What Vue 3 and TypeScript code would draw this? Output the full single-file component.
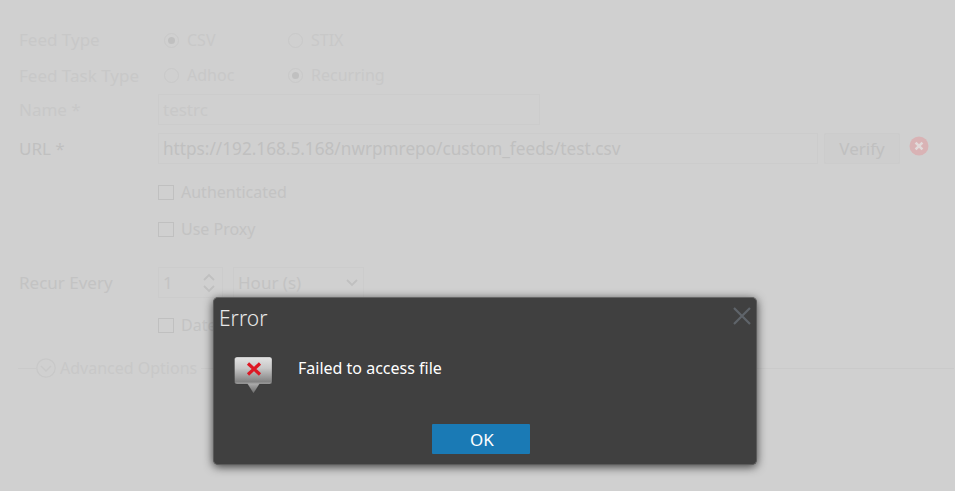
<script setup lang="ts">
const title = 'Error'
const message = 'Failed to access file'
</script>

<template>
  <div class="page">
    <form class="form">
      <div class="row r-type">
        <span class="label faint">Feed Type</span>
        <div class="radios">
          <span class="radio-item"><i class="radio on"></i><span class="faint">CSV</span></span>
          <span class="radio-item"><i class="radio"></i><span class="faint">STIX</span></span>
        </div>
      </div>
      <div class="row r-task">
        <span class="label faint">Feed Task Type</span>
        <div class="radios">
          <span class="radio-item"><i class="radio"></i><span class="faint">Adhoc</span></span>
          <span class="radio-item"><i class="radio on"></i><span class="faint">Recurring</span></span>
        </div>
      </div>
      <div class="row r-name">
        <span class="label faint">Name *</span>
        <div class="input name faint">testrc</div>
      </div>
      <div class="row r-url">
        <span class="label mid">URL *</span>
        <div class="input url mid">https://192.168.5.168/nwrpmrepo/custom_feeds/test.csv</div>
        <div class="verify mid">Verify</div>
        <svg class="err" width="20" height="20" viewBox="0 0 20 20">
          <circle cx="10" cy="10" r="9.500" fill="#d9b3b5" />
          <path d="M6.600 6.600l6.800 6.800M13.400 6.600l-6.800 6.800" stroke="#e2dada" stroke-width="2.600" />
        </svg>
      </div>
      <label class="check r-auth"><i class="box"></i><span class="soft">Authenticated</span></label>
      <label class="check r-proxy"><i class="box"></i><span class="soft">Use Proxy</span></label>
      <div class="row r-recur">
        <span class="label soft">Recur Every</span>
        <div class="input spin soft">
          <span>1</span>
          <svg width="14" height="24" viewBox="0 0 14 24" fill="none" stroke="#c0c0c0" stroke-width="1.800">
            <path d="M2 9l5-5 5 5M2 15l5 5 5-5" />
          </svg>
        </div>
        <div class="input select soft">
          <span>Hour (s)</span>
          <svg width="14" height="10" viewBox="0 0 14 10" fill="none" stroke="#c0c0c0" stroke-width="1.800">
            <path d="M2 2l5 5 5-5" />
          </svg>
        </div>
      </div>
      <label class="check r-date"><i class="box"></i><span class="soft">Date Range</span></label>
      <div class="advanced">
        <span class="dash short"></span>
        <svg width="20" height="20" viewBox="0 0 20 20" fill="none" stroke="#c8c8c8" stroke-width="1.200">
          <circle cx="10" cy="10" r="9.200" />
          <path d="M5 8l5 5 5-5" stroke-width="1.500" />
        </svg>
        <span class="faint adv-text">Advanced Options</span>
        <span class="dash long"></span>
      </div>
    </form>

    <section class="dialog" role="alertdialog">
      <header class="head">
        <h2>{{ title }}</h2>
        <svg class="close" width="18" height="18" viewBox="0 0 18 18" stroke="#5f646a" stroke-width="2.200" fill="none">
          <path d="M1 1l16 16M17 1L1 17" />
        </svg>
      </header>
      <div class="body">
        <svg class="bubble" width="40" height="38" viewBox="0 0 40 38">
          <defs>
            <linearGradient id="bub" x1="0" y1="0" x2="0" y2="1">
              <stop offset="0" stop-color="#e4e4e4" />
              <stop offset="0.3" stop-color="#c8c8c8" />
              <stop offset="0.68" stop-color="#828282" />
              <stop offset="0.74" stop-color="#ababab" />
              <stop offset="0.8" stop-color="#9a9a9a" />
              <stop offset="1" stop-color="#6a6a6a" />
            </linearGradient>
          </defs>
          <path d="M3.500 1h32a2.500 2.500 0 0 1 2.500 2.500v22a2.500 2.500 0 0 1-2.500 2.500h-10l-6 9.500-6-9.500h-10.500a2.500 2.500 0 0 1-2.500-2.500v-22a2.500 2.500 0 0 1 2.500-2.500z" fill="url(#bub)" stroke="#2a2a2a" stroke-opacity="0.300" stroke-width="0.800" />
          <path d="M14 7.500l12 11M26 7.500l-12 11" stroke="#dd1824" stroke-width="3.200" />
        </svg>
        <p>{{ message }}</p>
      </div>
      <footer class="foot"><div class="ok">OK</div></footer>
    </section>
  </div>
</template>

<style>
html, body { margin: 0; padding: 0; background: #d0d0d0; }
</style>

<style scoped>
.page {
  width: 955px;
  height: 491px;
  background: #d0d0d0;
  position: relative;
  overflow: hidden;
  font-family: "Noto Sans", "Open Sans", sans-serif;
  font-size: 16px;
}
.form { display: flex; flex-direction: column; padding-left: 19px; }
.faint { color: #c8c8c8; }
.mid { color: #c0c0c0; }
.soft { color: #c3c3c3; }
.row { display: flex; align-items: center; font-size: 16px; }
.label { width: 139px; flex: none; font-size: 17px; }
.r-type { height: 24px; margin-top: 28px; }
.r-type .label { margin-top: -2px; }
.r-task { height: 24px; margin-top: 11px; }
.r-name { height: 31px; margin-top: 7px; }
.r-url { height: 31px; margin-top: 8px; }
.radios { display: flex; margin-left: 6px; }
.radio-item { display: flex; align-items: center; gap: 8px; width: 124px; }
.radio {
  width: 15px; height: 15px; border-radius: 50%;
  border: 1px solid #c9c9c9; box-sizing: border-box; position: relative;
}
.radio.on::after {
  content: ""; position: absolute; inset: 3px; border-radius: 50%; background: #c0c0c0;
}
.input {
  box-sizing: border-box;
  border: 1px solid #cccccc;
  height: 31px;
  padding: 0 4px;
  display: flex;
  align-items: center;
}
.name { width: 382px; font-size: 17px; }
.url { width: 660px; font-size: 17.200px; }
.verify {
  margin-left: 6px; width: 76px; height: 31px; box-sizing: border-box;
  border: 1px solid #cccccc; border-radius: 2px;
  background: #cecece;
  display: flex; align-items: center; justify-content: center;
  font-size: 17px;
}
.err { margin-left: 9px; margin-top: -6px; flex: none; }
.check { display: flex; align-items: center; gap: 7px; margin-left: 139px; height: 24px; }
.box { width: 16px; height: 15px; box-sizing: border-box; border: 1px solid #c0c0c0; }
.r-auth { margin-top: 16px; }
.r-proxy { margin-top: 13px; }
.r-recur { margin-top: 26px; height: 31px; }
.spin { width: 65px; justify-content: space-between; padding-right: 6px; font-size: 17px; }
.select { width: 131px; margin-left: 10px; justify-content: space-between; padding-right: 4px; font-size: 17px; }
.r-date { margin-top: 15px; }
.advanced { display: flex; align-items: center; margin-top: 19px; height: 24px; width: 936px; margin-left: -1px; }
.dash { height: 1px; background: #cacaca; display: block; }
.short { width: 18px; }
.adv-text { margin-left: 4px; margin-right: 4px; }
.long { flex: 1; }

.dialog {
  position: absolute;
  left: 213px;
  top: 297px;
  width: 544px;
  height: 168px;
  box-sizing: border-box;
  background: #404040;
  border: 1px solid #5c5c5c;
  border-top-color: #666;
  border-radius: 5px;
  box-shadow: 0 2px 10px rgba(0, 0, 0, 0.7);
  color: #fff;
  display: flex;
  flex-direction: column;
}
.head { display: flex; align-items: center; justify-content: space-between; height: 40px; padding: 0 5px 0 5px; }
.head h2 { margin: 0; font-size: 21px; font-weight: 300; color: #e9e9e9; }
.close { margin-top: -4px; }
.body { display: flex; align-items: flex-start; height: 86px; padding-left: 20px; }
.bubble { margin-top: 18px; flex: none; }
.body p { margin: 19px 0 0 24px; font-size: 16px; line-height: 22px; }
.foot { display: flex; justify-content: center; padding-right: 8px; }
.ok {
  width: 98px; height: 30px; background: #1a7ab5; border-radius: 1px; box-sizing: border-box; padding-left: 2px;
  display: flex; align-items: center; justify-content: center; font-size: 17px;
}
</style>
